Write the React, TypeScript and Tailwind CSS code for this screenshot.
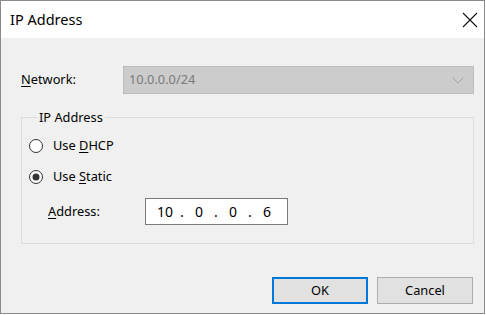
import type { ReactNode } from 'react'

const font = { fontFamily: '"Noto Sans", "Liberation Sans", Arial, sans-serif' }

export default function App() {
  return (
    <div className="w-[486px] h-[315px] bg-white" style={font}>
      <div className="w-[485px] h-[314px] border border-[#8a8a8a] flex flex-col">
        <div className="h-[37px] bg-white flex items-center justify-between pl-[9px] pr-[6px]">
          <span className="text-[14.5px] text-black leading-none">IP Address</span>
          <svg width="16" height="16" viewBox="0 0 16 16" className="text-[#111]">
            <path d="M1 1 L15 15 M15 1 L1 15" stroke="currentColor" strokeWidth="1.1" fill="none" />
          </svg>
        </div>

        <div className="flex-1 bg-[#f0f0f0] pl-[20px] flex flex-col text-[12.8px] text-black">
          <div className="mt-[28px] flex items-center h-[28px]">
            <span className="w-[102px]">
              <Key>N</Key>etwork:
            </span>
            <div className="w-[351px] h-[28px] border border-[#bcbcbc] bg-[#cccccc] flex items-center justify-between pl-[5px] pr-[9px]">
              <span className="text-[#7a7a7a]">10.0.0.0/24</span>
              <svg width="12" height="7" viewBox="0 0 12 7">
                <path d="M0.5 0.5 L6 6 L11.5 0.5" stroke="#a3a3a3" strokeWidth="1" fill="none" />
              </svg>
            </div>
          </div>

          <fieldset className="mt-[15px] w-[453px] border border-[#dcdcdc] pl-[7px] pb-[18px]">
            <legend className="ml-[8px] px-[2px] leading-[16px]">IP Address</legend>
            <div className="mt-[13px] flex flex-col gap-[15px]">
              <Radio>
                Use <Key>D</Key>HCP
              </Radio>
              <Radio checked>
                Use <Key>S</Key>tatic
              </Radio>
            </div>
            <div className="mt-[13px] ml-[19px] flex items-center">
              <span className="w-[97px]">
                <Key>A</Key>ddress:
              </span>
              <div className="w-[143px] h-[27px] border border-[#7a7a7a] bg-white flex items-center pl-[4px] text-[14px]">
                <Octet>10</Octet>
                <Dot />
                <Octet>0</Octet>
                <Dot />
                <Octet>0</Octet>
                <Dot />
                <Octet>6</Octet>
              </div>
            </div>
          </fieldset>

          <div className="mt-[33px] flex justify-end gap-[9px] pr-[11px]">
            <button className="w-[96px] h-[27px] bg-[#e1e1e1] border-2 border-[#0078d7] text-black">
              OK
            </button>
            <button className="w-[96px] h-[27px] bg-[#e1e1e1] border border-[#adadad] text-black">
              Cancel
            </button>
          </div>
        </div>
      </div>
    </div>
  )
}

function Key({ children }: { children: ReactNode }) {
  return <span className="underline underline-offset-2">{children}</span>
}

function Radio({ checked, children }: { checked?: boolean; children: ReactNode }) {
  return (
    <div className="flex items-center h-[16px] gap-[10px]">
      <svg width="14" height="14" viewBox="0 0 14 14">
        <circle cx="7" cy="7" r="6.5" fill="#fff" stroke="#333" strokeWidth="1" />
        {checked && <circle cx="7" cy="7" r="3.5" fill="#333" />}
      </svg>
      <span>{children}</span>
    </div>
  )
}

function Octet({ children }: { children: ReactNode }) {
  return <span className="w-[30px] text-center">{children}</span>
}

function Dot() {
  return <span className="w-[4px] text-center">.</span>
}
